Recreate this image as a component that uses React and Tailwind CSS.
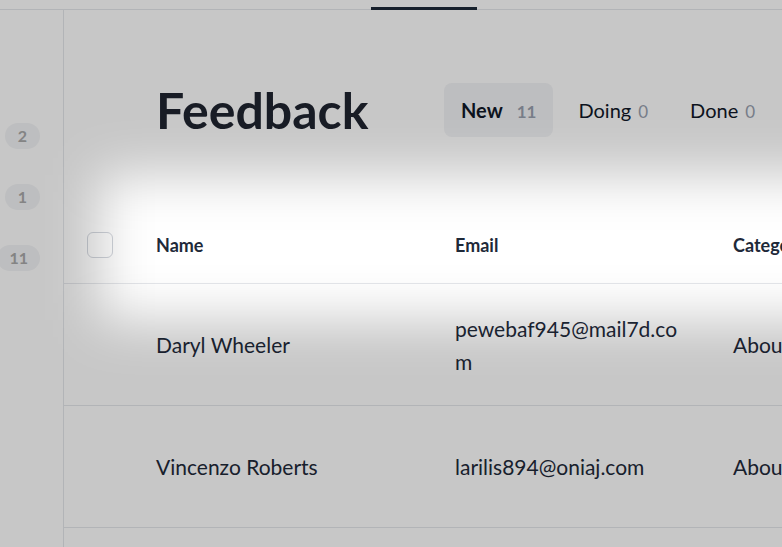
import React from "react";

const badges = ["2", "1", "11"];

const tabs = [
  { label: "New", count: 11, active: true },
  { label: "Doing", count: 0 },
  { label: "Done", count: 0 },
];

const rows = [
  { name: "Daryl Wheeler", email: "pewebaf945@mail7d.com", category: "About the product" },
  { name: "Vincenzo Roberts", email: "larilis894@oniaj.com", category: "About the product" },
  { name: "Marcus Holloway", email: "tomiva512@kiabws.com", category: "About the product" },
];

function Checkbox() {
  return <div className="w-[26px] h-[26px] rounded-md border border-gray-300 bg-white" />;
}

function Spotlight() {
  // dim everything but the table header, soft edges
  return (
    <div className="absolute inset-0 pointer-events-none overflow-hidden">
      <div className="absolute left-[-900px] top-[-825px] w-[2800px] h-[2145px] border-[1000px] border-black/[0.22] blur-[26px]" />
    </div>
  );
}

export default function App() {
  return (
    <div className="relative w-[782px] h-[547px] overflow-hidden bg-white text-gray-800 font-['Lato','Liberation_Sans',sans-serif]">
      <div className="flex items-end h-[10px] border-b border-gray-200">
        <div className="w-[371px]" />
        <div className="w-[106px] h-[3px] bg-gray-800 -mb-px" />
      </div>

      <div className="flex h-[537px]">
        <aside className="w-16 shrink-0 border-r border-gray-200 flex flex-col items-end pr-[23px] pt-[113px] gap-[35px]">
          {badges.map((b) => (
            <span
              key={b}
              className="min-w-[35px] h-[26px] px-3 rounded-full bg-gray-100 text-[#a9a9a9] text-base font-bold flex items-center justify-center"
            >
              {b}
            </span>
          ))}
        </aside>

        <main className="flex-1 min-w-0">
          <div className="flex items-center h-[54px] mt-[73px] mb-[70px] pl-[92px]">
            <h1 className="w-[288px] shrink-0 text-[50px] font-bold text-[#1f2430]">Feedback</h1>
            <div className="flex items-center gap-2">
              {tabs.map((t) => (
                <div
                  key={t.label}
                  className={
                    "h-[54px] px-[17px] rounded-lg flex items-center whitespace-nowrap text-xl text-gray-900 " +
                    (t.active ? "bg-gray-100" : "")
                  }
                >
                  <span className={t.active ? "font-bold" : ""}>
                    {t.label}
                    <span className={"text-[17px] text-gray-400 " + (t.active ? "ml-3.5 font-bold" : "ml-[7px]")}>
                      {t.count}
                    </span>
                  </span>
                </div>
              ))}
            </div>
          </div>

          <div className="flex items-center h-[77px] border-b border-gray-200 text-lg font-bold whitespace-nowrap">
            <div className="w-[92px] shrink-0 pl-[23px]">
              <Checkbox />
            </div>
            <div className="w-[299px] shrink-0">Name</div>
            <div className="w-[278px] shrink-0">Email</div>
            <div>Category</div>
          </div>

          {rows.map((r) => (
            <div key={r.email} className="flex items-center h-[122px] border-b border-gray-200 text-[21px]">
              <div className="w-[92px] shrink-0" />
              <div className="w-[299px] shrink-0 whitespace-nowrap">{r.name}</div>
              <div className="w-[278px] shrink-0">
                <div className="w-[236px] break-all leading-[33px]">{r.email}</div>
              </div>
              <div className="whitespace-nowrap">{r.category}</div>
            </div>
          ))}
        </main>
      </div>

      <Spotlight />
    </div>
  );
}
